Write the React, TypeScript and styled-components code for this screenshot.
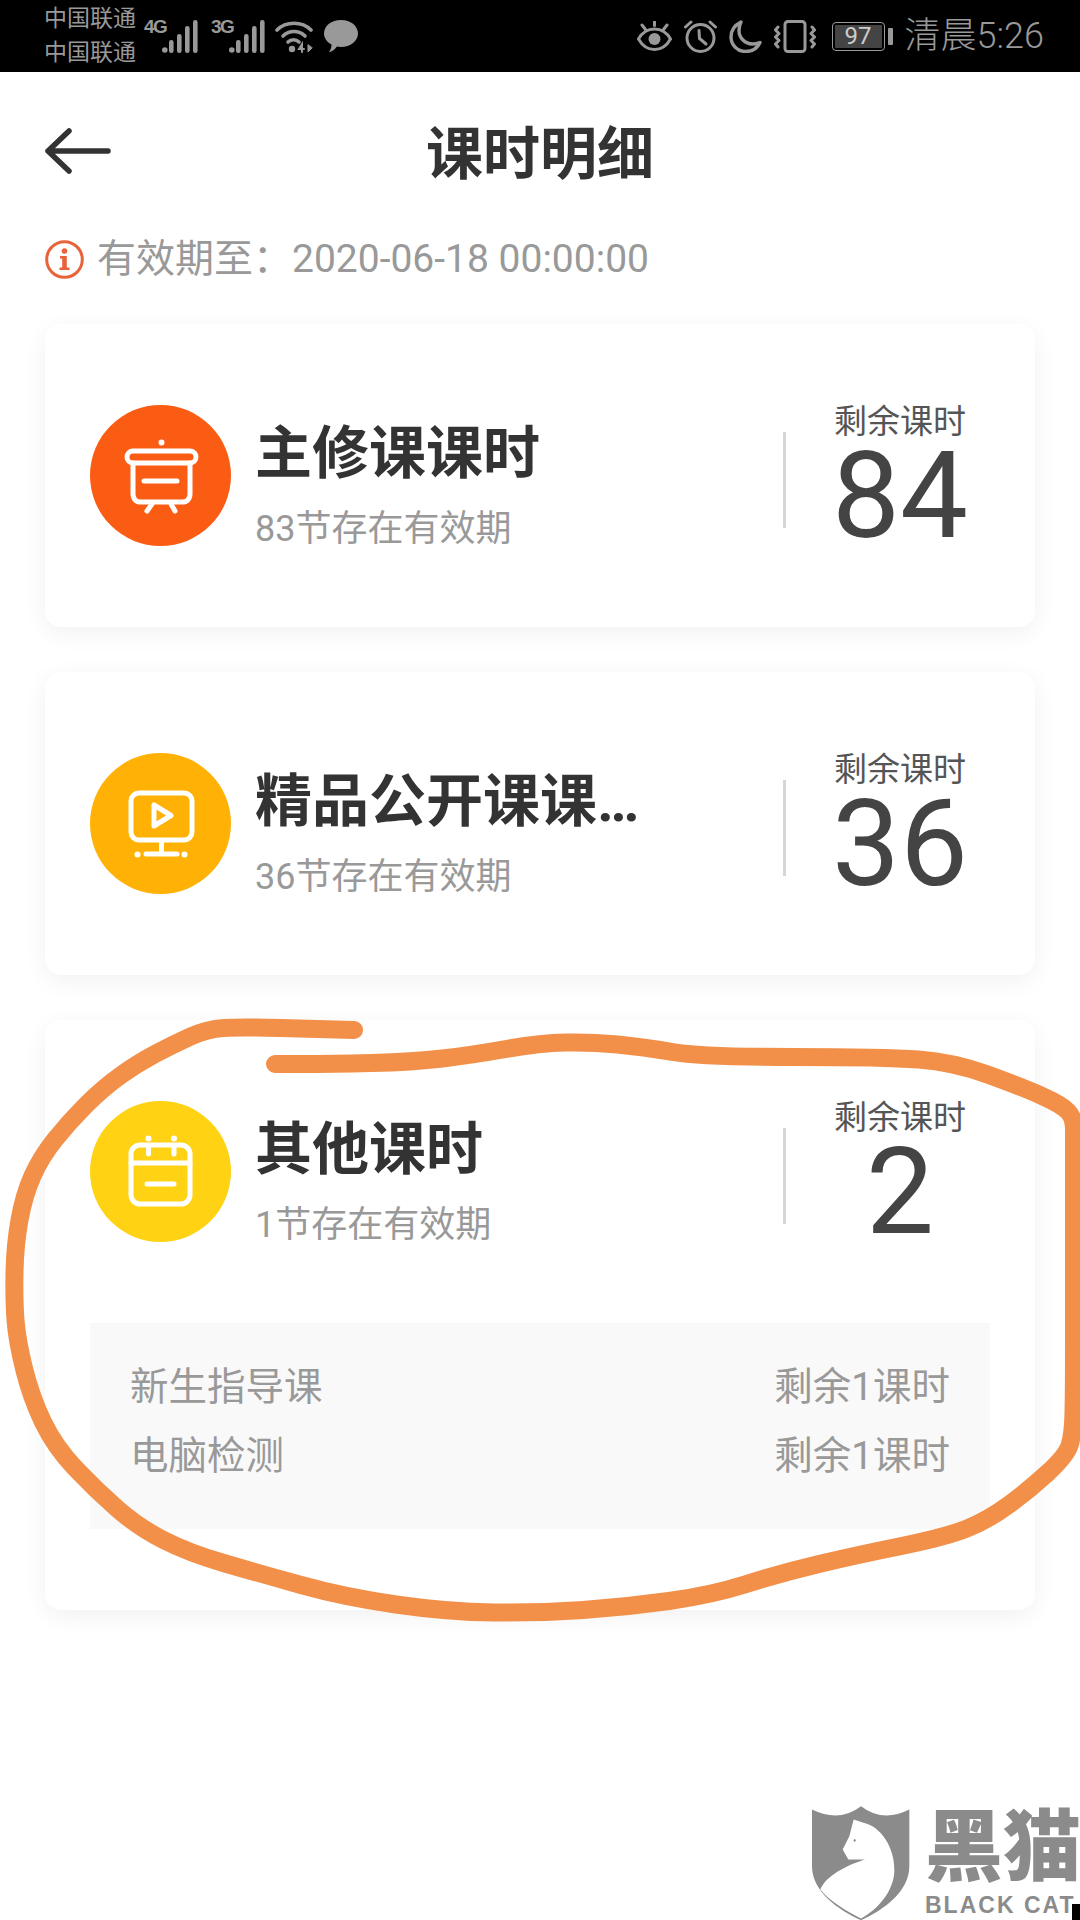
import React from 'react';
import styled, { createGlobalStyle } from 'styled-components';

const GlobalStyle = createGlobalStyle`
  html, body {
    margin: 0;
    padding: 0;
    background: #fff;
    font-family: Roboto, "Noto Sans CJK SC", sans-serif;
  }
`;

// the orange circle somebody drew over the screenshot
const scribble: [number, number][] = [
  [354, 1030], [320, 1029], [241, 1027], [207, 1029], [172, 1045], [138, 1063], [103, 1088], [69, 1122], [41, 1157],
  [24, 1195], [15, 1245], [14, 1300], [17, 1340], [31, 1397], [55, 1447], [96, 1490], [138, 1527], [189, 1553],
  [258, 1573], [344, 1597], [448, 1612], [540, 1613], [626, 1607], [712, 1595], [781, 1573], [857, 1555],
  [946, 1537], [988, 1520], [1029, 1490], [1066, 1456], [1073, 1435], [1074, 1390], [1074, 1300], [1074, 1140],
  [1074, 1118], [1062, 1105], [1022, 1087], [953, 1062], [884, 1057], [702, 1057], [643, 1047], [592, 1042], [540, 1043],
  [472, 1055], [413, 1062], [330, 1064], [275, 1064],
];

const smoothPath = (pts: [number, number][]) => {
  let d = `M${pts[0][0]} ${pts[0][1]}`;
  for (let i = 1; i < pts.length - 1; i++) {
    const mx = (pts[i][0] + pts[i + 1][0]) / 2;
    const my = (pts[i][1] + pts[i + 1][1]) / 2;
    d += ` Q${pts[i][0]} ${pts[i][1]} ${mx} ${my}`;
  }
  const last = pts[pts.length - 1];
  return `${d} L${last[0]} ${last[1]}`;
};

const SignalBars = () => (
  <svg width="36" height="33" viewBox="0 0 36 33" fill="#999">
    <circle cx="2.800" cy="30" r="2.800" />
    <rect x="7" y="20" width="4.600" height="13" rx="2.200" />
    <rect x="15" y="14" width="4.600" height="19" rx="2.200" />
    <rect x="23" y="6" width="4.600" height="27" rx="2.200" />
    <rect x="31" y="0" width="4.600" height="33" rx="2.200" />
  </svg>
);

const WifiIcon = () => (
  <svg width="38" height="33" viewBox="0 0 38 33" fill="none" stroke="#999" strokeWidth="3.600" strokeLinecap="round">
    <path d="M2 10C11 1 27 1 36 10" />
    <path d="M8 16C14 10 24 10 30 16" />
    <path d="M13 22C16 19 21 19 24 22" />
    <circle cx="17" cy="29" r="3.200" fill="#999" stroke="none" />
    <path d="M27 32V24L24 29H29" strokeWidth="2" />
    <path d="M33 25V32L37 28Z" fill="#999" strokeWidth="1" />
  </svg>
);

const BubbleIcon = () => (
  <svg width="34" height="33" viewBox="0 0 34 33" fill="#999">
    <path d="M17 0C26.500 0 34 5.800 34 13.500C34 21 26.500 27 17 27C15.500 27 14 26.800 13 26.600C11 29.500 8 32 5 32C6.800 30 7.600 27 7.500 24.600C3 22.200 0 18 0 13.500C0 5.800 7.500 0 17 0Z" />
  </svg>
);

const EyeIcon = () => (
  <svg width="35" height="30" viewBox="0 0 35 30" fill="none" stroke="#999" strokeWidth="3" strokeLinecap="round">
    <path d="M1.500 18C6 10 12 8 17.500 8C23 8 29 10 33.500 18C29 26 23 28.500 17.500 28.500C12 28.500 6 26 1.500 18Z" />
    <circle cx="17.500" cy="18" r="6" fill="#999" stroke="none" />
    <path d="M5 4L8.500 8.500M17.500 0.500V4.500M30 4L26.500 8.500" />
  </svg>
);

const AlarmIcon = () => (
  <svg width="33" height="33" viewBox="0 0 33 33" fill="none" stroke="#999" strokeWidth="3" strokeLinecap="round">
    <circle cx="16.500" cy="18" r="13.500" />
    <path d="M15 10.500L15.500 18.500L22 24" />
    <path d="M1.500 7L7 2M31.500 7L26 2" />
  </svg>
);

const MoonIcon = () => (
  <svg width="33" height="33" viewBox="0 0 33 33" fill="none" stroke="#999" strokeWidth="3.400">
    <path d="M12 2C6 5 2 10.500 2 17C2 25 8.500 31.500 16.500 31.500C23 31.500 28.500 28 31 22.500C28.500 23.500 26 24 23.500 24C16 24 10 18 10 10.500C10 7.500 10.700 4.500 12 2Z" strokeLinejoin="round" />
  </svg>
);

const VibrateIcon = () => (
  <svg width="42" height="33" viewBox="0 0 42 33" fill="none" stroke="#999" strokeWidth="3" strokeLinecap="round" strokeLinejoin="round">
    <rect x="11" y="1.500" width="20" height="30" rx="3" />
    <path d="M4 7L1.500 10L5 13.500L1.500 17L5 20.500L1.500 24L4 27" />
    <path d="M38 7L40.500 10L37 13.500L40.500 17L37 20.500L40.500 24L38 27" />
  </svg>
);

const InfoIcon = () => (
  <svg width="39" height="39" viewBox="0 0 39 39" fill="none">
    <circle cx="19.500" cy="19.500" r="17.800" stroke="#e8623a" strokeWidth="3" />
    <circle cx="19.500" cy="11" r="2.800" fill="#e8623a" />
    <path d="M15 16H21.800V27.500H24.500V30H14.500V27.500H17.200V18.500H15Z" fill="#e8623a" />
  </svg>
);

const BoardIcon = () => (
  <svg width="141" height="141" viewBox="0 0 141 141" fill="none" stroke="#fff" strokeWidth="5" strokeLinecap="round" strokeLinejoin="round">
    <circle cx="71.500" cy="37.500" r="3" fill="#fff" stroke="none" />
    <rect x="37" y="46" width="69" height="12" rx="6" />
    <path d="M43 58V89C43 94 46 97 51 97H92C97 97 100 94 100 89V58" />
    <path d="M54 76H87" />
    <path d="M62 99L57 106M81 99L85 106" />
  </svg>
);

const ScreenIcon = () => (
  <svg width="141" height="141" viewBox="0 0 141 141" fill="none" stroke="#fff" strokeWidth="5" strokeLinecap="round" strokeLinejoin="round">
    <rect x="41" y="40" width="61" height="47" rx="8" />
    <path d="M64 52V73L81 62.500Z" />
    <path d="M71.500 88V101M56 101H87" />
    <circle cx="47.500" cy="101.500" r="3" fill="#fff" stroke="none" />
    <circle cx="94.500" cy="101.500" r="3" fill="#fff" stroke="none" />
  </svg>
);

const CalendarIcon = () => (
  <svg width="141" height="141" viewBox="0 0 141 141" fill="none" stroke="#fff" strokeWidth="5" strokeLinecap="round" strokeLinejoin="round">
    <rect x="41" y="44" width="59" height="59" rx="9" />
    <path d="M41 62H100" />
    <path d="M58.500 46V53M84 46V53" />
    <circle cx="58.500" cy="37.500" r="3" fill="#fff" stroke="none" />
    <circle cx="84" cy="37.500" r="3" fill="#fff" stroke="none" />
    <path d="M57 83H84" />
  </svg>
);

const BlackCatShield = () => (
  <svg width="100" height="117" viewBox="150 72 300 350">
    <path
      d="M153 85Q235 125 300 75Q365 125 445 85V255C445 330 370 385 300 417C230 385 153 330 153 255Z"
      fill="#8b8b8b"
    />
    <path
      d="M278 115L305 124C360 135 402 200 400 270C398 330 350 385 300 412C260 392 205 360 178 325C195 285 250 255 312 235H262L245 205L265 165Z"
      fill="#fff"
    />
    <circle cx="281" cy="178" r="3.500" fill="#8b8b8b" />
  </svg>
);

interface Course {
  title: string;
  sub: string;
  left: number;
  color: string;
  icon: React.ReactNode;
  details?: { name: string; left: string }[];
}

const courses: Course[] = [
  { title: '主修课课时', sub: '83节存在有效期', left: 84, color: '#fb5c14', icon: <BoardIcon /> },
  { title: '精品公开课课时', sub: '36节存在有效期', left: 36, color: '#ffb205', icon: <ScreenIcon /> },
  {
    title: '其他课时',
    sub: '1节存在有效期',
    left: 2,
    color: '#ffd214',
    icon: <CalendarIcon />,
    details: [
      { name: '新生指导课', left: '剩余1课时' },
      { name: '电脑检测', left: '剩余1课时' },
    ],
  },
];

const App: React.FC = () => (
  <Page>
    <GlobalStyle />
    <StatusBar>
      <StatusGroup>
        <Carrier>
          <span>中国联通</span>
          <span>中国联通</span>
        </Carrier>
        <NetLabel>4G</NetLabel>
        <SignalBars />
        <NetLabel $gap={13}>3G</NetLabel>
        <SignalBars />
        <WifiSlot>
          <WifiIcon />
        </WifiSlot>
        <BubbleSlot>
          <BubbleIcon />
        </BubbleSlot>
      </StatusGroup>
      <StatusGroup>
        <StatusIcons>
          <EyeIcon />
          <AlarmIcon />
          <MoonIcon />
          <VibrateIcon />
        </StatusIcons>
        <Battery>
          <BatteryBody>
            <BatteryFill>97</BatteryFill>
          </BatteryBody>
          <BatteryCap />
        </Battery>
        <Clock>清晨5:26</Clock>
      </StatusGroup>
    </StatusBar>

    <NavBar>
      <BackButton>
        <svg width="66" height="46" viewBox="0 0 66 46" fill="none" stroke="#333" strokeWidth="5.500" strokeLinecap="round" strokeLinejoin="round">
          <path d="M24 3L3 23L24 43M3 23H63" />
        </svg>
      </BackButton>
      <NavTitle>课时明细</NavTitle>
    </NavBar>

    <Notice>
      <InfoIcon />
      <NoticeText>有效期至：2020-06-18 00:00:00</NoticeText>
    </Notice>

    <CardList>
      {courses.map((c) => (
        <Card key={c.title}>
          <CardRow>
            <Badge $color={c.color}>{c.icon}</Badge>
            <CardText>
              <CardTitle>{c.title}</CardTitle>
              <CardSub>{c.sub}</CardSub>
            </CardText>
            <Divider />
            <Remain>
              <RemainLabel>剩余课时</RemainLabel>
              <RemainCount>{c.left}</RemainCount>
            </Remain>
          </CardRow>
          {c.details && (
            <Details>
              {c.details.map((d) => (
                <DetailRow key={d.name}>
                  <span>{d.name}</span>
                  <span>{d.left}</span>
                </DetailRow>
              ))}
            </Details>
          )}
        </Card>
      ))}
    </CardList>

    <Scribble width="1080" height="1920" viewBox="0 0 1080 1920">
      <path d={smoothPath(scribble)} fill="none" stroke="#f2904a" strokeWidth="18" strokeLinecap="round" strokeLinejoin="round" />
    </Scribble>

    <Watermark>
      <BlackCatShield />
      <WatermarkText>
        <WatermarkName>黑猫</WatermarkName>
        <WatermarkLatin>BLACK CAT</WatermarkLatin>
      </WatermarkText>
    </Watermark>
    <CornerBlock />
  </Page>
);
export default App;

const Page = styled.div`
  position: relative;
  width: 1080px;
  height: 1920px;
  overflow: hidden;
  background: #fff;
`;
const StatusBar = styled.div`
  height: 72px;
  background: #000;
  color: #999;
  display: flex;
  justify-content: space-between;
  align-items: center;
  padding: 0 36px 0 44px;
`;
const StatusGroup = styled.div`
  display: flex;
  align-items: center;
`;
const Carrier = styled.div`
  display: flex;
  flex-direction: column;
  font-size: 23px;
  line-height: 34px;
  width: 100px;
`;
const NetLabel = styled.span<{ $gap?: number }>`
  font-family: "Liberation Sans", sans-serif;
  font-weight: 700;
  font-size: 19px;
  line-height: 19px;
  letter-spacing: -1.5px;
  width: 18px;
  align-self: flex-start;
  margin: 15px 0 0 ${(p) => p.$gap || 0}px;
`;
const WifiSlot = styled.div`
  display: flex;
  margin-left: 10px;
`;
const BubbleSlot = styled.div`
  display: flex;
  margin-left: 11px;
`;
const StatusIcons = styled.div`
  display: flex;
  align-items: center;
  gap: 12px;
`;
const Battery = styled.div`
  display: flex;
  align-items: center;
  margin-left: 16px;
  gap: 3px;
`;
const BatteryBody = styled.div`
  width: 53px;
  height: 29px;
  box-sizing: border-box;
  border: 1.5px solid #999;
  border-radius: 4px;
  padding: 2px;
  display: flex;
`;
const BatteryFill = styled.div`
  flex: 1;
  background: #444;
  border-radius: 1px;
  color: #ccc;
  font-size: 24px;
  line-height: 22px;
  text-align: center;
`;
const BatteryCap = styled.div`
  width: 5px;
  height: 17px;
  background: #999;
  border-radius: 1px;
`;
const Clock = styled.div`
  margin-left: 12px;
  font-size: 36px;
  font-weight: 300;
  line-height: 42px;
`;
const NavBar = styled.div`
  position: relative;
  height: 153px;
  padding-bottom: 5px;
  display: flex;
  align-items: center;
  justify-content: center;
`;
const BackButton = styled.div`
  position: absolute;
  left: 45px;
  top: 56px;
  display: flex;
`;
const NavTitle = styled.h1`
  margin: 0;
  font-size: 57px;
  font-weight: 700;
  color: #333;
`;
const Notice = styled.div`
  display: flex;
  align-items: center;
  height: 58px;
  padding-left: 45px;
  margin-bottom: 36px;
`;
const NoticeText = styled.div`
  margin-left: 13px;
  font-size: 39px;
  line-height: 44px;
  color: #999;
`;
const CardList = styled.div`
  display: flex;
  flex-direction: column;
  gap: 45px;
  padding: 0 45px;
`;
const Card = styled.div`
  padding: 81px 45px;
  background: #fff;
  border-radius: 16px;
  box-shadow: 0 6px 24px rgba(0, 0, 0, 0.06);
`;
const CardRow = styled.div`
  display: flex;
  align-items: center;
  height: 141px;
`;
const Badge = styled.div<{ $color: string }>`
  flex: none;
  width: 141px;
  height: 141px;
  border-radius: 50%;
  background: ${(p) => p.$color};
`;
const CardText = styled.div`
  flex: 1;
  min-width: 0;
  margin-left: 24px;
  display: flex;
  flex-direction: column;
  align-self: flex-start;
`;
const CardTitle = styled.div`
  max-width: 390px;
  margin-top: 13px;
  font-size: 57px;
  line-height: 72px;
  font-weight: 700;
  color: #333;
  white-space: nowrap;
  overflow: hidden;
  text-overflow: ellipsis;
`;
const CardSub = styled.div`
  margin-top: 17px;
  font-size: 36px;
  line-height: 44px;
  color: #999;
`;
const Divider = styled.div`
  flex: none;
  width: 3px;
  height: 96px;
  margin-top: 9px;
  background: #d6d6d6;
`;
const Remain = styled.div`
  flex: none;
  box-sizing: border-box;
  width: 204px;
  padding-left: 24px;
  align-self: flex-start;
  display: flex;
  flex-direction: column;
  align-items: center;
  color: #444;
`;
const RemainLabel = styled.div`
  font-size: 33px;
  line-height: 34px;
  color: #555;
`;
const RemainCount = styled.div`
  font-size: 121px;
  line-height: 114px;
`;
const Details = styled.div`
  height: 206px;
  box-sizing: border-box;
  margin-top: 81px;
  padding: 29px 40px 0;
  background: #f9f9f9;
`;
const DetailRow = styled.div`
  display: flex;
  justify-content: space-between;
  font-size: 38.5px;
  line-height: 69px;
  color: #999;
`;
const Scribble = styled.svg`
  position: absolute;
  left: 0;
  top: 0;
  pointer-events: none;
`;
const Watermark = styled.div`
  position: absolute;
  left: 811px;
  top: 1805px;
  display: flex;
`;
const WatermarkText = styled.div`
  margin-left: 14px;
  display: flex;
  flex-direction: column;
  color: #8b8b8b;
  white-space: nowrap;
`;
const WatermarkName = styled.div`
  font-size: 78px;
  line-height: 88px;
  font-weight: 900;
`;
const WatermarkLatin = styled.div`
  font-family: "Liberation Sans", sans-serif;
  font-weight: 700;
  font-size: 23px;
  letter-spacing: 2px;
  line-height: 24px;
`;
const CornerBlock = styled.div`
  position: absolute;
  right: 0;
  bottom: 0;
  width: 8px;
  height: 16px;
  background: #000;
`;
